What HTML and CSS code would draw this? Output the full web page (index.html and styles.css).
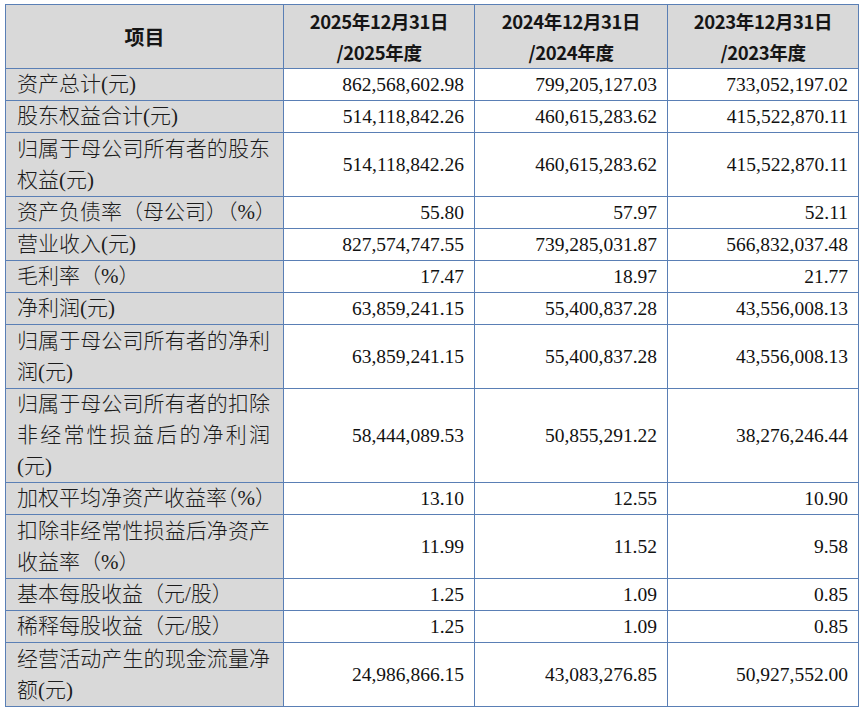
FILE: index.html
```html
<!DOCTYPE html>
<html lang="zh-CN">
<head>
<meta charset="utf-8">
<title>主要财务数据</title>
<link rel="stylesheet" href="styles.css">
</head>
<body>
<div class="wrap">
<table class="fin">
  <colgroup>
    <col class="c1"><col class="c2"><col class="c3"><col class="c4">
  </colgroup>
  <thead>
    <tr class="h">
      <th class="item">项目</th>
      <th>2025年12月31日<br>/2025年度</th>
      <th>2024年12月31日<br>/2024年度</th>
      <th>2023年12月31日<br>/2023年度</th>
    </tr>
  </thead>
  <tbody>
    <tr><td class="lab">资产总计(元)</td><td>862,568,602.98</td><td>799,205,127.03</td><td>733,052,197.02</td></tr>
    <tr><td class="lab">股东权益合计(元)</td><td>514,118,842.26</td><td>460,615,283.62</td><td>415,522,870.11</td></tr>
    <tr class="r2"><td class="lab">归属于母公司所有者的股东权益(元)</td><td>514,118,842.26</td><td>460,615,283.62</td><td>415,522,870.11</td></tr>
    <tr><td class="lab">资产负债率（母公司）（%）</td><td>55.80</td><td>57.97</td><td>52.11</td></tr>
    <tr><td class="lab">营业收入(元)</td><td>827,574,747.55</td><td>739,285,031.87</td><td>566,832,037.48</td></tr>
    <tr><td class="lab">毛利率（%）</td><td>17.47</td><td>18.97</td><td>21.77</td></tr>
    <tr><td class="lab">净利润(元)</td><td>63,859,241.15</td><td>55,400,837.28</td><td>43,556,008.13</td></tr>
    <tr class="r2"><td class="lab">归属于母公司所有者的净利润(元)</td><td>63,859,241.15</td><td>55,400,837.28</td><td>43,556,008.13</td></tr>
    <tr class="r3"><td class="lab">归属于母公司所有者的扣除非经常性损益后的净利润(元)</td><td>58,444,089.53</td><td>50,855,291.22</td><td>38,276,246.44</td></tr>
    <tr><td class="lab tight">加权平均净资产收益率（%）</td><td>13.10</td><td>12.55</td><td>10.90</td></tr>
    <tr class="r2"><td class="lab">扣除非经常性损益后净资产收益率（%）</td><td>11.99</td><td>11.52</td><td>9.58</td></tr>
    <tr><td class="lab">基本每股收益（元/股）</td><td>1.25</td><td>1.09</td><td>0.85</td></tr>
    <tr><td class="lab">稀释每股收益（元/股）</td><td>1.25</td><td>1.09</td><td>0.85</td></tr>
    <tr class="r2"><td class="lab">经营活动产生的现金流量净额(元)</td><td>24,986,866.15</td><td>43,083,276.85</td><td>50,927,552.00</td></tr>
  </tbody>
</table>
</div>
</body>
</html>
```

FILE: styles.css
```css
html, body {
  margin: 0;
  padding: 0;
  background: #ffffff;
}

.wrap {
  padding: 4px 0 0 5px;
}

.fin {
  border-collapse: collapse;
  table-layout: fixed;
  width: 853px;
  color: #111111;
}

.c1 { width: 278px; }
.c2 { width: 191px; }
.c3 { width: 193px; }
.c4 { width: 191px; }

.fin th,
.fin td {
  border: 1px solid #5a7fb5;
  padding: 0;
  vertical-align: middle;
}

.fin th {
  background: #d9d9d9;
  font-family: "Noto Sans CJK SC", "Liberation Sans", sans-serif;
  font-weight: 700;
  font-size: 18.5px;
  letter-spacing: -0.4px;
  line-height: 31px;
  text-align: center;
  height: 63px;
  color: #151515;
}

.fin th.item {
  font-size: 20px;
  letter-spacing: 0;
}

.fin td {
  font-family: "Liberation Serif", "Times New Roman", serif;
  font-size: 19.5px;
  line-height: 31px;
  height: 31px;
  text-align: right;
  padding-right: 10px;
}

.fin td.lab {
  background: #d9d9d9;
  font-family: "Liberation Serif", "Noto Sans CJK SC", serif;
  font-weight: 300;
  font-size: 21px;
  text-align: justify;
  padding: 0 13px 0 11px;
  color: #1c1c1c;
}

.fin td.tight {
  font-feature-settings: "halt";
  white-space: nowrap;
}

.fin tr.r2 td { height: 63px; }
.fin tr.r3 td { height: 93px; }
```
